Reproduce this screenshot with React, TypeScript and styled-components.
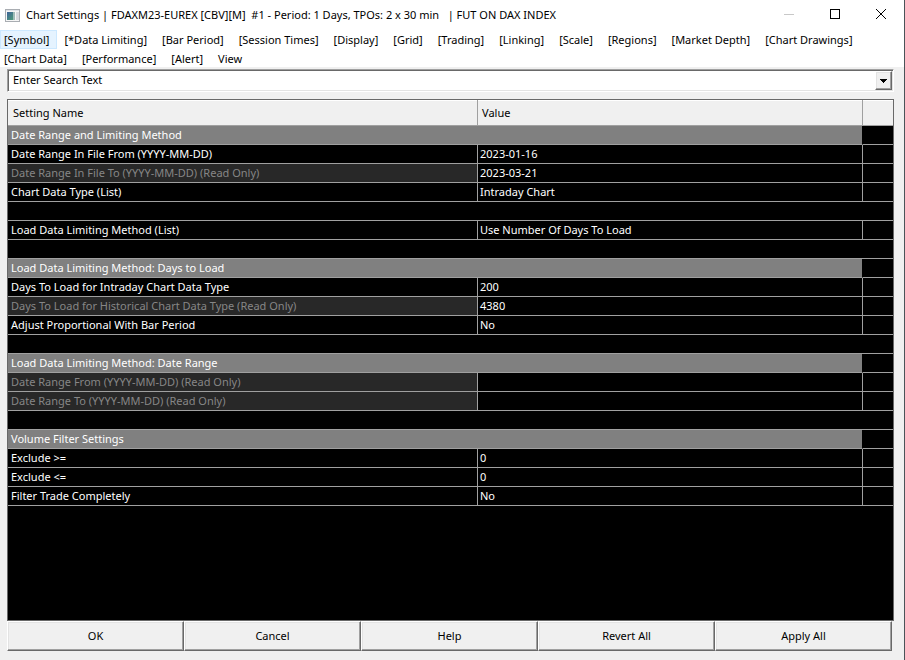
import React from "react";
import styled, { createGlobalStyle, css } from "styled-components";

const GlobalStyle = createGlobalStyle`
  * { box-sizing: border-box; }
  html, body, #root { height: 100%; }
  body {
    margin: 0;
    background: #f0f0f0;
    color: #000;
    font-family: "Noto Sans", "Open Sans", sans-serif;
    font-size: 11px;
    line-height: 18px;
  }
  button, input { font: inherit; color: inherit; }
`;

const Window = styled.main`
  display: flex;
  flex-direction: column;
  min-height: 100%;
  padding-bottom: 9px;
  border-right: 1px solid #4a5358;
`;

const TitleBar = styled.header`
  display: flex;
  align-items: center;
  height: 30px;
  padding-left: 5px;
  background: #fff;
`;

const Title = styled.h1`
  flex: 1;
  margin: 0 0 0 5px;
  font-size: 11px;
  font-weight: 400;
  white-space: pre;
`;

const CaptionButton = styled.button`
  display: flex;
  align-items: center;
  justify-content: center;
  width: 46px;
  height: 30px;
  padding: 0 0 2px;
  border: 0;
  background: transparent;
`;

const MenuBar = styled.nav`
  display: flex;
  flex-wrap: wrap;
  column-gap: 3px;
  min-height: 37px;
  padding-right: 36px;
  background: #fff;
`;

const MenuItem = styled.button<{ $active?: boolean }>`
  height: 19px;
  padding: 0 7px 0 3px;
  border: 1px solid ${(p) => (p.$active ? "#cce8ff" : "transparent")};
  background: ${(p) => (p.$active ? "#e5f3ff" : "transparent")};
  line-height: 17px;
  white-space: nowrap;

  &:nth-child(n + 13) {
    height: 18px;
  }
`;

const bevel = css`
  border: 1px solid;
  border-color: #fff #696969 #696969 #fff;
  box-shadow: inset -1px -1px #a0a0a0, inset 1px 1px #e3e3e3;
  background: #f0f0f0;
`;

const SearchBox = styled.div`
  display: flex;
  height: 23px;
  margin: 2px 10px 7px 7px;
  padding: 1px;
  border: 1px solid;
  border-color: #a0a0a0 #fff #fff #a0a0a0;
  box-shadow: inset 1px 1px #696969, inset -1px -1px #e3e3e3;
  background: #fff;
`;

const SearchInput = styled.input`
  flex: 1;
  min-width: 0;
  padding: 0 4px 1px;
  border: 0;
  outline: 0;
  background: transparent;
`;

const DropButton = styled.button`
  ${bevel}
  display: flex;
  align-items: center;
  justify-content: center;
  width: 17px;
  padding: 0;
`;

const GridPanel = styled.section`
  flex: 1;
  margin: 0 10px 0 7px;
  border: 1px solid #696969;
  background: #000;
`;

const SettingsTable = styled.table`
  width: 100%;
  table-layout: fixed;
  border-collapse: separate;
  border-spacing: 0;
  color: #fff;

  th, td {
    overflow: hidden;
    border-bottom: 1px solid #a0a0a0;
    font-weight: 400;
    text-align: left;
    white-space: nowrap;
  }
`;

const NameCol = styled.col`
  width: 470px;
`;

const EndCol = styled.col`
  width: 30px;
`;

const HeadCell = styled.th<{ $last?: boolean }>`
  height: 26px;
  padding: 1px 4px 0;
  border-right: ${(p) => (p.$last ? "0" : "1px solid #a0a0a0")};
  background: #f0f0f0;
  box-shadow: inset 0 1px #fff;
  color: #000;

  &:first-child {
    padding-left: 5px;
  }
`;

const SectionCell = styled.th`
  height: 19px;
  padding: 0 3px;
  border-right: 1px solid #000;
  background: #808080;
`;

const NameCell = styled.th<{ $readOnly?: boolean }>`
  height: 19px;
  padding: 0 3px;
  border-right: 1px solid #a0a0a0;
  background: ${(p) => (p.$readOnly ? "#282828" : "#000")};
  color: ${(p) => (p.$readOnly ? "#868686" : "#fff")};
`;

const ValueCell = styled.td`
  padding: 0 2px;
  border-right: 1px solid #a0a0a0;
`;

const BlankCell = styled.td`
  height: 19px;
  padding: 0;
`;

const Actions = styled.footer`
  display: flex;
  height: 30px;
  margin: 0 12px 0 7px;
`;

const ActionButton = styled.button`
  ${bevel}
  flex: 1;
  padding: 0;
`;

type Row =
  | { kind: "section"; name: string }
  | { kind: "gap" }
  | { kind: "setting"; name: string; value: string; readOnly?: boolean };

const section = (name: string): Row => ({ kind: "section", name });
const setting = (name: string, value: string, readOnly = false): Row => ({
  kind: "setting",
  name,
  value,
  readOnly,
});
const gap: Row = { kind: "gap" };

const rows: Row[] = [
  section("Date Range and Limiting Method"),
  setting("Date Range In File From (YYYY-MM-DD)", "2023-01-16"),
  setting("Date Range In File To (YYYY-MM-DD) (Read Only)", "2023-03-21", true),
  setting("Chart Data Type (List)", "Intraday Chart"),
  gap,
  setting("Load Data Limiting Method (List)", "Use Number Of Days To Load"),
  gap,
  section("Load Data Limiting Method: Days to Load"),
  setting("Days To Load for Intraday Chart Data Type", "200"),
  setting("Days To Load for Historical Chart Data Type (Read Only)", "4380", true),
  setting("Adjust Proportional With Bar Period", "No"),
  gap,
  section("Load Data Limiting Method: Date Range"),
  setting("Date Range From (YYYY-MM-DD) (Read Only)", "", true),
  setting("Date Range To (YYYY-MM-DD) (Read Only)", "", true),
  gap,
  section("Volume Filter Settings"),
  setting("Exclude >=", "0"),
  setting("Exclude <=", "0"),
  setting("Filter Trade Completely", "No"),
];

const menu = [
  "[Symbol]",
  "[*Data Limiting]",
  "[Bar Period]",
  "[Session Times]",
  "[Display]",
  "[Grid]",
  "[Trading]",
  "[Linking]",
  "[Scale]",
  "[Regions]",
  "[Market Depth]",
  "[Chart Drawings]",
  "[Chart Data]",
  "[Performance]",
  "[Alert]",
  "View",
];

const actions = ["OK", "Cancel", "Help", "Revert All", "Apply All"];

function AppIcon() {
  return (
    <svg width="16" height="13" viewBox="0 0 16 13" aria-hidden="true">
      <defs>
        <linearGradient id="pane" x1="0" y1="0" x2="1" y2="1">
          <stop offset="0" stopColor="#3d6299" />
          <stop offset="1" stopColor="#4fa373" />
        </linearGradient>
      </defs>
      <rect x="0.5" y="0.5" width="14" height="12" fill="#f6f6f6" stroke="#a9adb2" />
      <rect x="1" y="1" width="13" height="1" fill="#dfe3e8" />
      <rect x="2" y="3" width="8" height="8" fill="url(#pane)" />
      <rect x="8" y="3" width="2" height="8" fill="#9fbcb8" />
      <rect x="11" y="3" width="3" height="8" fill="#d6dade" />
    </svg>
  );
}

function SettingsRow({ row }: { row: Row }) {
  if (row.kind === "gap") {
    return (
      <tr>
        <BlankCell colSpan={3} />
      </tr>
    );
  }
  if (row.kind === "section") {
    return (
      <tr>
        <SectionCell colSpan={2} scope="rowgroup">
          {row.name}
        </SectionCell>
        <BlankCell />
      </tr>
    );
  }
  return (
    <tr>
      <NameCell scope="row" $readOnly={row.readOnly}>
        {row.name}
      </NameCell>
      <ValueCell>{row.value}</ValueCell>
      <BlankCell />
    </tr>
  );
}

export default function App() {
  return (
    <>
      <GlobalStyle />
      <Window>
        <TitleBar>
          <AppIcon />
          <Title>
            {"Chart Settings | FDAXM23-EUREX [CBV][M]  #1 - Period: 1 Days, TPOs: 2 x 30 min   | FUT ON DAX INDEX"}
          </Title>
          <CaptionButton aria-label="Minimize" disabled>
            <svg width="10" height="11" viewBox="0 0 10 11">
              <path d="M0 5.5h10" stroke="#c8c8c8" />
            </svg>
          </CaptionButton>
          <CaptionButton aria-label="Maximize">
            <svg width="10" height="10" viewBox="0 0 10 10">
              <rect x="0.5" y="0.5" width="9" height="9" fill="none" stroke="#000" />
            </svg>
          </CaptionButton>
          <CaptionButton aria-label="Close">
            <svg width="10" height="10" viewBox="0 0 10 10">
              <path d="M0 0l10 10M10 0L0 10" stroke="#000" />
            </svg>
          </CaptionButton>
        </TitleBar>
        <MenuBar aria-label="Settings pages">
          {menu.map((label, i) => (
            <MenuItem key={label} $active={i === 0}>
              {label}
            </MenuItem>
          ))}
        </MenuBar>
        <SearchBox>
          <SearchInput type="text" aria-label="Search settings" defaultValue="Enter Search Text" />
          <DropButton aria-label="Show search history">
            <svg width="7" height="4" viewBox="0 0 7 4" shapeRendering="crispEdges">
              <path d="M0 0h7v1H0zM1 1h5v1H1zM2 2h3v1H2zM3 3h1v1H3z" fill="#000" />
            </svg>
          </DropButton>
        </SearchBox>
        <GridPanel>
          <SettingsTable>
            <colgroup>
              <NameCol />
              <col />
              <EndCol />
            </colgroup>
            <thead>
              <tr>
                <HeadCell scope="col">Setting Name</HeadCell>
                <HeadCell scope="col">Value</HeadCell>
                <HeadCell $last aria-label="Options" />
              </tr>
            </thead>
            <tbody>
              {rows.map((row, i) => (
                <SettingsRow key={i} row={row} />
              ))}
            </tbody>
          </SettingsTable>
        </GridPanel>
        <Actions>
          {actions.map((label) => (
            <ActionButton key={label}>{label}</ActionButton>
          ))}
        </Actions>
      </Window>
    </>
  );
}
